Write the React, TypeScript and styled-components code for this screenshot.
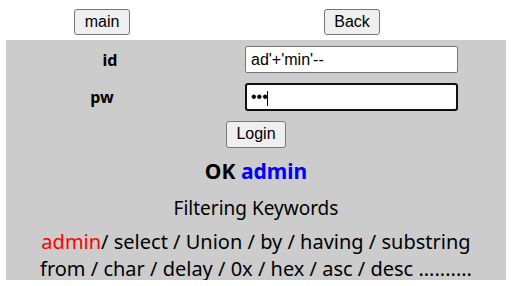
import React from "react";
import styled, { createGlobalStyle } from "styled-components";

const Global = createGlobalStyle`
  html, body { margin: 0; padding: 0; background: #ffffff; }
  body { font-family: "Noto Sans", "Noto Sans CJK KR", sans-serif; color: #000; }
`;

const Wrapper = styled.div`
  width: 500px;
  margin-left: 6px;
`;

const TopBar = styled.div`
  display: grid;
  grid-template-columns: 192px 308px;
  justify-items: center;
  padding: 9px 0 5px;
`;

const Button = styled.button<{ $tall?: boolean }>`
  font-family: "Liberation Sans", Arial, sans-serif;
  font-size: 16px;
  line-height: 18px;
  color: #000;
  background: #efefef;
  border: 1px solid #767676;
  border-radius: 3px;
  padding: ${(p) => (p.$tall ? "3px 9.5px 4px" : "3px 9.5px")};
  margin: 0;
  cursor: pointer;
`;

const Panel = styled.div`
  background: #cccccc;
  height: 240px;
  padding-top: 6px;
  box-sizing: border-box;
  display: flex;
  flex-direction: column;
  align-items: center;
`;

const Form = styled.div`
  width: 100%;
  display: grid;
  grid-template-columns: 200px 1fr;
  grid-template-rows: 27px 28px;
  row-gap: 10px;
  align-items: center;
`;

const Label = styled.div<{ $side: "left" | "right" }>`
  font-weight: 700;
  font-size: 16px;
  text-align: center;
  box-sizing: border-box;
  padding-left: ${(p) => (p.$side === "left" ? "8px" : "0")};
  padding-right: ${(p) => (p.$side === "right" ? "8px" : "0")};
`;

const Field = styled.div`
  position: relative;
  margin-left: 39px;
  width: 213px;
  height: 100%;
`;

const Input = styled.input<{ $focused?: boolean }>`
  box-sizing: border-box;
  width: 213px;
  height: 100%;
  margin: 0;
  font-family: "Liberation Sans", Arial, sans-serif;
  font-size: 16px;
  color: #000;
  background: #fff;
  padding: 1px ${(p) => (p.$focused ? "4px" : "5px")};
  border: ${(p) => (p.$focused ? "2px solid #101010" : "1px solid #767676")};
  border-radius: ${(p) => (p.$focused ? "3px" : "2px")};
  outline: none;
`;

const Caret = styled.span`
  position: absolute;
  left: 22px;
  top: 8px;
  width: 1px;
  height: 15px;
  background: #000;
`;

const LoginRow = styled.div`
  margin-top: 10px;
`;

const Result = styled.div`
  margin-top: 10px;
  font-size: 21px;
  line-height: 27px;
  font-weight: 700;
`;

const Blue = styled.span`
  color: #0000ff;
`;

const Title = styled.div`
  margin-top: 10px;
  font-size: 19px;
  line-height: 26px;
`;

const Keywords = styled.div`
  margin-top: 7px;
  font-size: 20px;
  line-height: 27px;
  text-align: center;
`;

const Red = styled.span`
  color: #ff0000;
`;

export default function App() {
  return (
    <>
      <Global />
      <Wrapper>
        <TopBar>
          <Button>main</Button>
          <Button>Back</Button>
        </TopBar>
        <Panel>
          <Form>
            <Label $side="left">id</Label>
            <Field>
              <Input type="text" defaultValue="ad'+'min'--" />
            </Field>
            <Label $side="right">pw</Label>
            <Field>
              <Input type="password" defaultValue="123" $focused />
              <Caret />
            </Field>
          </Form>
          <LoginRow>
            <Button $tall>Login</Button>
          </LoginRow>
          <Result>
            OK <Blue>admin</Blue>
          </Result>
          <Title>Filtering Keywords</Title>
          <Keywords>
            <Red>admin</Red>/ select / Union / by / having / substring
            <br />
            from / char / delay / 0x / hex / asc / desc ..........
          </Keywords>
        </Panel>
      </Wrapper>
    </>
  );
}
